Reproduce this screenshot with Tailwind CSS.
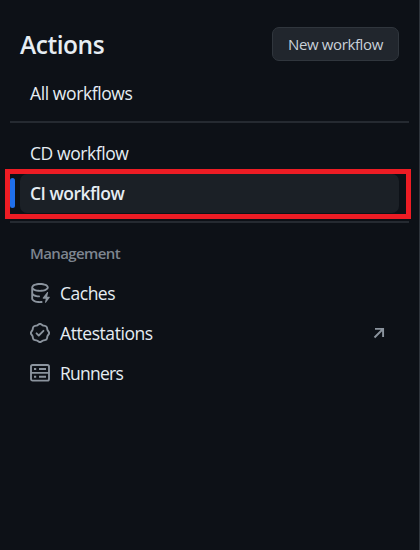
<!DOCTYPE html>
<html lang="en">
<head>
<meta charset="utf-8">
<title>Actions</title>
<script src="https://cdn.jsdelivr.net/npm/@tailwindcss/browser@4"></script>
</head>
<body class="bg-[#0d1117] overflow-hidden">
<aside class="w-[420px] h-[550px] border-r border-[#30363d] bg-[#0d1117] pl-[10px] pr-[10px] pt-[27px] font-['Open_Sans','Noto_Sans',sans-serif] text-[17.5px] text-[#e6edf3]">
  <header class="flex h-[34px] items-center justify-between px-[10px]">
    <h1 class="text-[24.5px] leading-[34px] font-semibold tracking-[-0.45px] pt-[2px]">Actions</h1>
    <button class="h-[34px] w-[127px] rounded-[7px] border border-[#30363d] bg-[#21262d] text-[15px] tracking-[-0.38px] text-[#c9d1d9]">New workflow</button>
  </header>
  <nav>
    <a class="mt-[12px] flex h-[40px] items-center pt-px pl-5 tracking-[-0.4px]">All workflows</a>
    <hr class="mt-[8px] h-[2px] border-0 bg-[#252a31]">
    <a class="mt-[10px] flex h-[40px] items-center pt-px pl-5 tracking-[-0.42px]">CD workflow</a>
    <div class="relative mt-[1px] h-[39px] px-[10px]">
      <a class="flex h-[39px] items-center rounded-[7px] bg-[#1b2026] pl-[10px] font-semibold tracking-[-0.5px]">CI workflow</a>
      <span class="absolute left-0 top-[4px] h-[30px] w-[5px] rounded-[3px] bg-[#1f6feb]"></span>
      <span class="absolute -left-[5px] -top-[5px] h-[50px] w-[406px] border-5 border-[#ed1c24]"></span>
    </div>
    <hr class="mt-[8px] h-[2px] border-0 bg-[#252a31]">
    <h2 class="mt-[10px] flex h-[40px] items-center pl-5 text-[15px] font-semibold tracking-[-0.6px] text-[#7d8590]">Management</h2>
    <a class="flex h-[40px] items-center gap-[10px] pl-5 tracking-[-0.5px]">
      <svg class="size-5 text-[#8b949e]" viewBox="0 0 16 16" fill="currentColor"><path d="M2.5 5.724V8c0 .248.238.7 1.169 1.159.874.43 2.144.745 3.62.822a.75.75 0 1 1-.078 1.498c-1.622-.085-3.102-.432-4.204-.975a5.565 5.565 0 0 1-.507-.28V12.5c0 .133.058.318.282.551.227.237.591.483 1.101.707 1.015.447 2.47.742 4.117.742.406 0 .802-.018 1.183-.052a.751.751 0 1 1 .134 1.494C8.89 15.98 8.45 16 8 16c-1.805 0-3.475-.32-4.721-.869-.623-.274-1.173-.619-1.579-1.041-.408-.425-.7-.964-.7-1.59v-9c0-.626.292-1.165.7-1.591.406-.42.956-.766 1.579-1.04C4.525.32 6.195 0 8 0c1.806 0 3.476.32 4.721.869.623.274 1.173.619 1.579 1.041.408.425.7.964.7 1.59 0 .626-.292 1.165-.7 1.591-.406.42-.956.766-1.578 1.04C11.475 6.68 9.805 7 8 7c-1.805 0-3.475-.32-4.721-.869a6.15 6.15 0 0 1-.779-.407Zm0-2.224c0 .133.058.318.282.551.227.237.591.483 1.101.707C4.898 5.205 6.353 5.5 8 5.5c1.646 0 3.101-.295 4.118-.742.508-.224.873-.471 1.1-.708.224-.232.282-.417.282-.55 0-.133-.058-.318-.282-.551-.227-.237-.591-.483-1.101-.707C11.102 1.795 9.647 1.5 8 1.5c-1.646 0-3.101.295-4.118.742-.508.224-.873.471-1.1.708-.224.232-.282.417-.282.55Z"/><path d="M14.49 7.582a.375.375 0 0 0-.66-.313l-3.625 4.625a.375.375 0 0 0 .295.606h2.127l-.619 2.922a.375.375 0 0 0 .666.304l3.125-4.125A.375.375 0 0 0 15.5 11h-1.778l.769-3.418Z"/></svg>
      <span class="pt-px">Caches</span>
    </a>
    <a class="flex h-[40px] items-center gap-[10px] pl-5 pr-[24px] tracking-[-0.43px]">
      <svg class="size-5 text-[#8b949e]" viewBox="0 0 16 16" fill="currentColor"><path d="m9.585.52.929.68c.153.112.331.186.518.215l1.138.175a2.678 2.678 0 0 1 2.24 2.24l.174 1.139c.029.187.103.365.215.518l.68.928a2.677 2.677 0 0 1 0 3.17l-.68.928a1.174 1.174 0 0 0-.215.518l-.175 1.138a2.678 2.678 0 0 1-2.241 2.241l-1.138.175a1.17 1.17 0 0 0-.518.215l-.928.68a2.677 2.677 0 0 1-3.17 0l-.928-.68a1.174 1.174 0 0 0-.518-.215L3.83 14.41a2.678 2.678 0 0 1-2.24-2.24l-.175-1.138a1.17 1.17 0 0 0-.215-.518l-.68-.928a2.677 2.677 0 0 1 0-3.17l.68-.928c.112-.153.186-.331.215-.518l.175-1.14a2.678 2.678 0 0 1 2.24-2.24l1.139-.175c.187-.029.365-.103.518-.215l.928-.68a2.677 2.677 0 0 1 3.17 0ZM7.303 1.728l-.927.68a2.67 2.67 0 0 1-1.18.489l-1.137.174a1.179 1.179 0 0 0-.987.987l-.174 1.136a2.677 2.677 0 0 1-.489 1.18l-.68.928a1.18 1.18 0 0 0 0 1.394l.68.927c.256.348.424.753.489 1.18l.174 1.137c.078.509.478.909.987.987l1.136.174a2.67 2.67 0 0 1 1.18.489l.928.68c.414.305.979.305 1.394 0l.927-.68a2.67 2.67 0 0 1 1.18-.489l1.137-.174a1.18 1.18 0 0 0 .987-.987l.174-1.136a2.67 2.67 0 0 1 .489-1.18l.68-.928a1.176 1.176 0 0 0 0-1.394l-.68-.927a2.686 2.686 0 0 1-.489-1.18l-.174-1.137a1.179 1.179 0 0 0-.987-.987l-1.136-.174a2.677 2.677 0 0 1-1.18-.489l-.928-.68a1.176 1.176 0 0 0-1.394 0ZM11.28 6.78l-3.75 3.75a.75.75 0 0 1-1.06 0L4.72 8.78a.751.751 0 0 1 .018-1.042.751.751 0 0 1 1.042-.018L7 8.94l3.22-3.22a.751.751 0 0 1 1.042.018.751.751 0 0 1 .018 1.042Z"/></svg>
      <span class="pt-px">Attestations</span>
      <svg class="ml-auto size-[12px]" viewBox="0 0 12 12" fill="none" stroke="#8b949e" stroke-width="1.9"><path d="M1.5 10.5 10 2M2 1.9h8.1V10"/></svg>
    </a>
    <a class="flex h-[40px] items-center gap-[10px] pl-5 tracking-[-0.75px]">
      <svg class="size-5" viewBox="0 0 20 20" fill="none" stroke="#8b949e" stroke-width="1.9"><rect x="1" y="2" width="18" height="15.6" rx="1.6"/><path d="M1 9.9h18M4 6h2.2M9 6h7M4 13.8h2.2M9 13.8h7"/></svg>
      <span class="pt-px">Runners</span>
    </a>
  </nav>
</aside>
</body>
</html>
